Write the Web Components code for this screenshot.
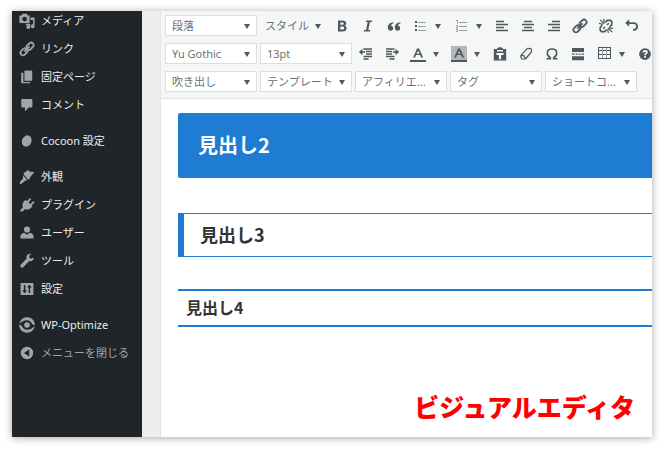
<!DOCTYPE html>
<html lang="ja">
<head>
<meta charset="utf-8">
<title>ビジュアルエディタ</title>
<style>
  body {
    margin: 0;
    background: #fff;
    font-family: "Noto Sans", "Noto Sans CJK JP", sans-serif;
  }
</style>
</head>
<body>
<editor-window>
  <side-menu slot="menu">
    <menu-item icon="media">メディア</menu-item>
    <menu-item icon="link">リンク</menu-item>
    <menu-item icon="pages">固定ページ</menu-item>
    <menu-item icon="comment">コメント</menu-item>
    <menu-item icon="cocoon" spaced>Cocoon 設定</menu-item>
    <menu-item icon="brush" spaced>外観</menu-item>
    <menu-item icon="plug">プラグイン</menu-item>
    <menu-item icon="user">ユーザー</menu-item>
    <menu-item icon="wrench">ツール</menu-item>
    <menu-item icon="sliders">設定</menu-item>
    <menu-item icon="optimize" spaced>WP-Optimize</menu-item>
    <menu-item icon="collapse" muted>メニューを閉じる</menu-item>
  </side-menu>

  <tool-bar slot="tools">
    <tool-row>
      <tool-select slot="selects" label="ブロック" value="段落"></tool-select>
      <tool-select slot="selects" label="スタイル" value="スタイル" plain></tool-select>
      <tool-button icon="bold" label="太字"></tool-button>
      <tool-button icon="italic" label="イタリック"></tool-button>
      <tool-button icon="quote" label="引用"></tool-button>
      <tool-button icon="bullets" label="番号なしリスト" menu></tool-button>
      <tool-button icon="numbers" label="番号付きリスト" menu></tool-button>
      <tool-button icon="left" label="左寄せ"></tool-button>
      <tool-button icon="center" label="中央揃え"></tool-button>
      <tool-button icon="right" label="右寄せ"></tool-button>
      <tool-button icon="link" label="リンクの挿入"></tool-button>
      <tool-button icon="unlink" label="リンクの削除"></tool-button>
      <tool-button icon="undo" label="取り消し"></tool-button>
      <tool-button icon="redo" label="やり直し" off></tool-button>
    </tool-row>
    <tool-row>
      <tool-select slot="selects" label="フォント" value="Yu Gothic"></tool-select>
      <tool-select slot="selects" label="フォントサイズ" value="13pt"></tool-select>
      <tool-button icon="outdent" label="インデントを減らす"></tool-button>
      <tool-button icon="indent" label="インデントを増やす"></tool-button>
      <tool-button icon="color" label="テキスト色" menu></tool-button>
      <tool-button icon="highlight" label="背景色" menu></tool-button>
      <tool-button icon="paste" label="テキストとしてペースト"></tool-button>
      <tool-button icon="eraser" label="書式設定をクリア"></tool-button>
      <tool-button icon="omega" label="特殊文字"></tool-button>
      <tool-button icon="more" label="続きを読む"></tool-button>
      <tool-button icon="table" label="テーブル" menu></tool-button>
      <tool-button icon="help" label="ヘルプ"></tool-button>
    </tool-row>
    <tool-row>
      <tool-select slot="selects" label="吹き出し" value="吹き出し"></tool-select>
      <tool-select slot="selects" label="テンプレート" value="テンプレート"></tool-select>
      <tool-select slot="selects" label="アフィリエイト" value="アフィリエ..."></tool-select>
      <tool-select slot="selects" label="タグ" value="タグ"></tool-select>
      <tool-select slot="selects" label="ショートコード" value="ショートコ..."></tool-select>
    </tool-row>
  </tool-bar>

  <post-heading level="2">見出し2</post-heading>
  <post-heading level="3">見出し3</post-heading>
  <post-heading level="4">見出し4</post-heading>
  <editor-caption slot="caption">ビジュアルエディタ</editor-caption>
</editor-window>

<script>
const chain = `
  <g fill="none" stroke="currentColor" stroke-width="1.8">
    <rect x="7" y="2.7" width="8" height="5" rx="2.5" transform="rotate(-45 11 5.2)"/>
    <rect x="1" y="8.3" width="8" height="5" rx="2.5" transform="rotate(-45 5 10.8)"/>
    <path d="M5.4 10.5 10.6 5.4"/>
  </g>`;

const fill = (d) => `<path fill="currentColor" fill-rule="evenodd" d="${d}"/>`;
const line = (d, w = 1.5) => `<path fill="none" stroke="currentColor" stroke-width="${w}" d="${d}"/>`;
const faint = (d) => `<path fill="none" stroke="#9a9fa4" stroke-width="1" d="${d}"/>`;

// every icon is drawn on a 16 x 16 grid
const ICONS = {
  media: fill("M.4 2.4h2L3.4.8h4.4l1 1.6h1.8V10H.4zM5.6 3.8a2.3 2.3 0 1 0 0 4.6 2.3 2.3 0 0 0 0-4.6z")
    + fill("M11.4 4.6h4.2v8.6a1.9 1.9 0 1 1-1.5-1.8V7h-2.7zM6.8 10.8h4.4v3.2a1.9 1.9 0 1 1-1.4-1.8h-3z"),
  link: chain,
  unlink: `
    <g fill="none" stroke="currentColor" stroke-width="1.6">
      <path d="M7.4 4.4 9.2 2.4h3.4l1.2 1.2v3L11.8 8.6M8.6 11.6l-1.8 2H3.4l-1.2-1.2v-3L4.2 7.4"/>
      <path d="M10.8 5.2 9 7M5.2 10.8 7 9"/>
      <path d="M1 5.4l4 1M2.2 1.8l4 4M5.6 1l.8 3.8M15 10.6l-4-1M14 14l-4-4M10.4 15l-.8-3.8" stroke-width="1.2"/>
    </g>`,
  pages: fill("M5.4 1.6h7.8v10.2H5.4z") + fill("M2.2 3.8h2.2v9.1h6.6v1.3H2.2z"),
  comment: fill("M3.2 2h9.2a1 1 0 0 1 1 1v6.6a1 1 0 0 1-1 1H9.6L6 14.6v-4H3.2a1 1 0 0 1-1-1V3a1 1 0 0 1 1-1z"),
  cocoon: `<ellipse cx="7.7" cy="8" rx="4.7" ry="5.8" transform="rotate(24 7.7 8)" fill="currentColor"/>`,
  brush: fill("M7.3 2.2 9.4 1l1.4 1.7 4.7.4-4.3 5-.6 1.8-1.4.6L4.4 5.2 5 3.9z")
    + fill("M4 6.4l4.5 4.7-2 .4-4 3.2c-1.2.8-2.4-.4-1.6-1.6L4 9.4z"),
  plug: fill("M10.6 1.4c.8-.7 2 .3 1.4 1.2L9.5 5.4l1.8 1.7 2.6-2.6c.9-.7 1.9.4 1.3 1.2l-2.6 2.8.9 1-1 1C10.3 12.6 7.8 13 6 12l-2.4 2.5H1.4l-.1-1.6L4 10.2c-1.2-2.3-.5-4.6 1.2-6.3l1-1 1.8 1.2z"),
  user: `<circle cx="8" cy="4.5" r="3.1" fill="currentColor"/>`
    + fill("M5.1 7.7 8 9.7l2.9-2c2.4.7 3.7 1.8 3.7 4.1v1.6H1.4v-1.6c0-2.3 1.3-3.4 3.7-4.1z"),
  wrench: fill("M14.5 4.4 12 5.8l-1.6-1 .1-2.6L12.4 1C10.5.3 8.2 1.3 7.6 3.3c-.3.9-.2 1.5.1 2.3l-6 6.2c-1.3 1.5.9 3.8 2.5 2.4l6-6.2c2.5.9 5-1 4.3-3.6z"),
  sliders: `<rect x="1.6" y="2" width="12.8" height="12" fill="currentColor"/>
    <path d="M5.6 4v8M10.4 4v8M3.8 10h3.6M8.6 6h3.6" stroke="#1f2529" stroke-width="1.5"/>`,
  optimize: `<circle cx="8" cy="8" r="2.8" fill="currentColor"/>`
    + fill("M.3 7C1 2.800 4.200.3 8 .3c3.600 0 6.500 2.100 7.500 5.400l.4 2.500-2.400-.7C12.400 5 10.400 3.300 8 3.300 5 3.300 2.600 4.600.3 7z")
    + fill("M15.700 9c-.7 4.200-3.900 6.700-7.700 6.700-3.600 0-6.500-2.100-7.500-5.400L.1 7.800l2.400.7C3.600 11 5.600 12.700 8 12.700c3 0 5.400-1.300 7.700-3.700z"),
  collapse: fill("M8 1.8a6.2 6.2 0 1 1 0 12.4A6.2 6.2 0 0 1 8 1.8zM10.2 4.6 5 8l5.2 3.4z"),

  bold: fill("M4 2.6h4.4c2.3 0 3.8.9 3.8 2.8 0 1.2-.7 2-1.7 2.3 1.3.3 2.1 1.1 2.1 2.5 0 2.1-1.6 3.2-4 3.2H4zM6.3 4.5v2.3H8c1.2 0 1.8-.4 1.8-1.2S9.2 4.5 8 4.5zm0 4v3h2c1.3 0 1.9-.5 1.9-1.5s-.6-1.5-1.9-1.5z"),
  italic: fill("M6.2 2.6h6l-.3 1.5h-2L8.3 11.9h1.9l-.3 1.5H3.7l.3-1.5h2L7.7 4.1H5.9z"),
  quote: fill("M7.4 4.2C4 4.4 1.8 6.5 1.8 9.6c0 2 1.2 3.1 2.8 3.1 1.5 0 2.6-1 2.6-2.5 0-1.4-.9-2.3-2.2-2.4.2-1 1-1.9 2.4-2.2zM14.4 4.2c-3.4.2-5.6 2.3-5.6 5.4 0 2 1.2 3.1 2.8 3.1 1.5 0 2.6-1 2.6-2.5 0-1.4-.9-2.3-2.2-2.4.2-1 1-1.9 2.4-2.2z"),
  bullets: fill("M3 3h2v2H3zM3 7h2v2H3zM3 11h2v2H3z") + faint("M6 4.5h8M6 8.5h8M6 12.5h8"),
  numbers: faint("M3 2.5h1.5v3M3 7.5h1.5v1.3L3 10h2M3 11.5h1.5v2H3M6 4.5h8M6 8.5h8M6 12.5h8"),
  left: line("M2 3.5h8M2 6.5h12M2 9.5h8M2 12.5h12"),
  center: line("M4 3.5h8M2 6.5h12M4 9.5h8M2 12.5h12"),
  right: line("M6 3.5h8M2 6.5h12M6 9.5h8M2 12.5h12"),
  undo: fill("M5.2 1.2v3h4.6a4.3 4.3 0 0 1 0 8.6H9v-1.9h.8a2.4 2.4 0 0 0 0-4.8H5.2v2.6L1.2 5z"),
  redo: fill("M10.8 1.2v3H6.2a4.3 4.3 0 0 0 0 8.6H7v-1.9h-.8a2.4 2.4 0 0 1 0-4.8h4.6v2.6L14.8 5z"),
  outdent: line("M5.5 3h8.5M8 5.5h6M8 8h6M5.5 10.5h8.5M5.5 13h5", 1.6) + line("M3.5 6h3.5", 1.6)
    + fill("M4.4 2.8v6.4L.9 6z"),
  indent: line("M2 3h8.5M2 5.5h6M2 8h6M2 10.5h8.5M5.5 13h5", 1.6) + line("M9 6h3.5", 1.6)
    + fill("M11.6 2.8v6.4L15.1 6z"),
  color: fill("M7 2.4h2.1l4 9h-2l-1-2.3H6l-.9 2.3H3.2zM8 4.5 6.6 7.7h2.9z") + fill("M0 14h16v2H0z"),
  highlight: `<path fill="#b4b6b8" d="M0 0h16v14H0z"/>`
    + fill("M7 2.4h2.1l4 9h-2l-1-2.3H6l-.9 2.3H3.2zM8 4.5 6.6 7.7h2.9z") + fill("M0 14h16v2H0z"),
  paste: fill("M1.8 3h3.4V1.8h1.5a1.4 1.4 0 0 1 2.6 0h1.5V3h3.4v11.4H1.8zM5 4v1.4h6V4zM4.4 7v2h2.5v4.2h2.2V9h2.5V7z"),
  eraser: `<g fill="none" stroke="currentColor" stroke-width="1.2" stroke-linejoin="round">
      <path d="M9.4 2.4 12.8 2.6 13.6 4.2 13.4 6 7.4 13 4 12.8 2.8 11.2 3 9.4z"/>
      <path d="M3 9.4 6.2 9.8 7.4 13"/></g>`,
  omega: line("M2.4 12.8h3.9v-1.2C4.3 10.7 3.3 9.2 3.3 7.3c0-2.6 1.9-4.3 4.7-4.3s4.7 1.7 4.7 4.3c0 1.9-1 3.4-3 4.3v1.2h3.9", 1.6),
  more: fill("M2 2h12v4H2zM2 7.4h2.6v1.4H2zM5.6 7.4h2v1.4h-2zM8.6 7.4h2v1.4h-2zM11.6 7.4H14v1.4h-2.4zM2 10.2h12v4H2z"),
  table: line("M2.5 1v12M14.5 1v12M2 1.5h13M2 4.5h13M2 8.5h13M2 12.5h13", 1) + faint("M6.5 2v10M10.5 2v10"),
  help: fill("M8 2.2a5.9 5.9 0 1 1 0 11.8A5.9 5.9 0 0 1 8 2.2zM5.5 6.6h1.8c0-.6.3-.9.8-.9s.8.2.8.7c0 .8-1.7.9-1.7 2.8h1.6c0-1.1 2-1.3 2-3 0-1.4-1.1-2.1-2.6-2.1-1.6 0-2.7.9-2.7 2.5zM7.2 10h1.7v1.7H7.2z")
};

class UiIcon extends HTMLElement {
  static observedAttributes = ["name"];

  constructor() {
    super();
    this.attachShadow({ mode: "open" });
    this.shadowRoot.innerHTML = `
      <style>
        :host { display: block; flex: none; width: 16px; height: 16px; }
        svg { display: block; width: 100%; height: 100%; }
      </style>
      <svg viewBox="0 0 16 16" aria-hidden="true"></svg>
    `;
  }

  attributeChangedCallback(attribute, before, name) {
    this.shadowRoot.querySelector("svg").innerHTML = ICONS[name] || "";
  }
}

customElements.define("ui-icon", UiIcon);

const define = (name, html, setup) => {
  const template = document.createElement("template");
  template.innerHTML = html;
  customElements.define(name, class extends HTMLElement {
    constructor() {
      super();
      this.attachShadow({ mode: "open" }).append(template.content.cloneNode(true));
      if (setup) setup(this, this.shadowRoot);
    }
  });
};

define("menu-item", `
  <style>
    :host { display: block; color: #eceded; font-size: 11px; }
    :host([spaced]) { margin-top: 8px; }
    :host([muted]) { color: #a0a5aa; }
    a {
      display: flex;
      align-items: center;
      gap: 6px;
      height: 28px;
      padding: 0 7px;
      color: inherit;
      line-height: 16px;
      white-space: nowrap;
      text-decoration: none;
    }
    ui-icon { color: #a0a5aa; }
  </style>
  <a href="#"><ui-icon></ui-icon><span><slot></slot></span></a>
`, (el, root) => {
  root.querySelector("ui-icon").setAttribute("name", el.getAttribute("icon"));
});

// the list is scrolled a little, so its first row is cut by the window
define("side-menu", `
  <style>
    :host { display: block; background: #1f2529; overflow: hidden; }
    nav { margin-top: -4px; }
  </style>
  <nav><slot></slot></nav>
`);

define("tool-select", `
  <style>
    :host { display: block; width: 92px; }
    :host([plain]) { width: 68px; }
    label { display: grid; align-items: center; }
    select {
      grid-area: 1 / 1;
      appearance: none;
      box-sizing: border-box;
      width: 100%;
      height: 21px;
      margin: 0;
      padding: 0 0 0 6px;
      border: 1px solid #dcdfe1;
      border-radius: 0;
      background: #fff;
      color: #6a7076;
      font: inherit;
      font-size: 11px;
    }
    :host([plain]) select {
      padding-left: 4px;
      border-color: transparent;
      background: none;
    }
    svg {
      grid-area: 1 / 1;
      justify-self: end;
      width: 6px;
      height: 6px;
      margin-right: 7px;
      pointer-events: none;
    }
  </style>
  <label>
    <select><option></option></select>
    <svg viewBox="0 0 6 6"><path d="M0 1h6L3 6z" fill="#50575e"/></svg>
  </label>
`, (el, root) => {
  root.querySelector("option").textContent = el.getAttribute("value");
  root.querySelector("select").setAttribute("aria-label", el.getAttribute("label"));
});

define("tool-button", `
  <style>
    :host { display: flex; flex: none; color: #50575e; }
    :host([off]) { color: #dcdfe1; }
    button {
      display: flex;
      align-items: center;
      justify-content: center;
      width: 26px;
      height: 21px;
      padding: 0;
      border: 0;
      background: none;
      color: inherit;
    }
    .arrow { display: none; width: 15px; padding-left: 2px; justify-content: start; }
    :host([menu]) .arrow { display: flex; }
    svg { width: 6px; height: 6px; }
  </style>
  <button class="main"><ui-icon></ui-icon></button>
  <button class="arrow"><svg viewBox="0 0 6 6"><path d="M0 1h6L3 6z" fill="currentColor"/></svg></button>
`, (el, root) => {
  const label = el.getAttribute("label");
  root.querySelector("ui-icon").setAttribute("name", el.getAttribute("icon"));
  root.querySelector(".main").setAttribute("aria-label", label);
  root.querySelector(".arrow").setAttribute("aria-label", label + " メニュー");
});

define("tool-row", `
  <style>
    :host { display: flex; gap: 1px; }
    .selects { display: flex; flex: none; gap: 3px; }
    .buttons { display: flex; flex: none; }
  </style>
  <div class="selects"><slot name="selects"></slot></div>
  <div class="buttons"><slot></slot></div>
`);

define("tool-bar", `
  <style>
    :host {
      display: flex;
      flex-direction: column;
      gap: 7px;
      padding: 4px 4px 6px;
      border-bottom: 1px solid #e2e4e6;
      background: #f5f7f7;
      overflow: hidden;
    }
  </style>
  <slot></slot>
`);

define("post-heading", `
  <style>
    :host {
      display: block;
      color: #333;
      font-family: "Noto Sans CJK JP", sans-serif;
    }
    h2, h3, h4 { margin: 0; font-weight: 700; line-height: 32px; }
    h2 {
      padding: 16px 20px 17px;
      border-radius: 2px 0 0 2px;
      background: #1e7cd2;
      color: #fff;
      font-size: 20px;
    }
    h3 {
      margin-top: 35px;
      padding: 4px 16px 6px;
      border: solid #1e7cd2;
      border-width: 1px 0 1px 6px;
      font-size: 18px;
    }
    h4 {
      margin-top: 32px;
      padding: 0 8px 2px;
      border: solid #1e7cd2;
      border-width: 2px 0;
      font-size: 16px;
    }
  </style>
`, (el, root) => {
  const heading = document.createElement("h" + el.getAttribute("level"));
  heading.append(document.createElement("slot"));
  root.append(heading);
});

define("editor-caption", `
  <style>
    :host {
      display: block;
      color: #f00;
      font-size: 25px;
      font-weight: 900;
      line-height: 32px;
      text-align: right;
    }
  </style>
  <slot></slot>
`);

define("editor-window", `
  <style>
    :host {
      display: flex;
      box-sizing: border-box;
      min-height: 100vh;
      padding: 11px 12px 13px;
    }
    .window {
      display: grid;
      grid-template-columns: 130px 18px minmax(0, 1fr);
      flex: 1;
      min-width: 0;
      background: #fff;
      box-shadow: 0 1px 8px rgba(0, 0, 0, 0.35);
      overflow: hidden;
    }
    .gutter { background: #eee; }
    main {
      display: flex;
      flex-direction: column;
      border-left: 1px solid #e2e4e6;
    }
    article { padding: 14px 0 0 17px; }
    footer { margin-top: auto; padding: 0 17px 14px; }
  </style>
  <div class="window">
    <slot name="menu"></slot>
    <div class="gutter"></div>
    <main>
      <slot name="tools"></slot>
      <article><slot></slot></article>
      <footer><slot name="caption"></slot></footer>
    </main>
  </div>
`);
</script>
</body>
</html>
